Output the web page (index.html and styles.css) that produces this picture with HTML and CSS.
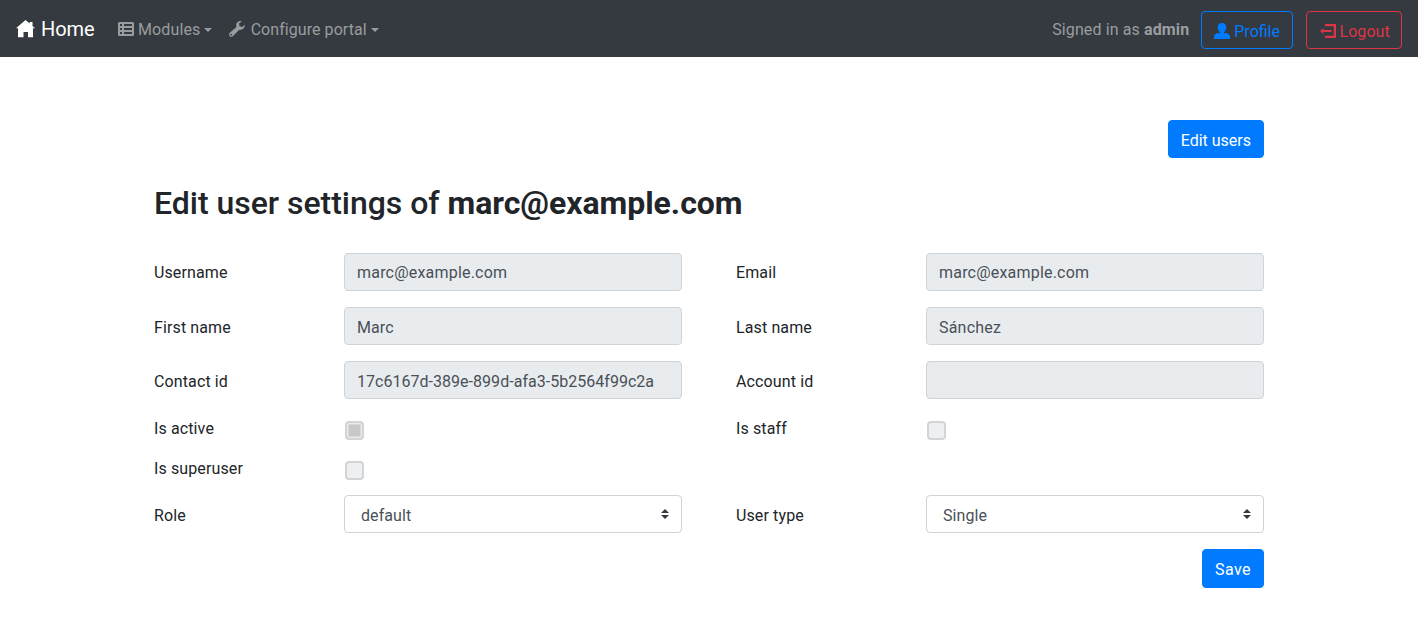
FILE: index.html
```html
<!DOCTYPE html>
<html lang="en">
<head>
<meta charset="utf-8">
<title>Edit user settings</title>
<link rel="stylesheet" href="styles.css">
</head>
<body>
<nav class="navbar">
  <a class="brand"><svg class="icon-home" viewBox="0 0 20 18"><path d="M9.500 0 0 8.300H2V17.300H7.500V12H12V17.300H17V8.300H19.200L16.500 5.900V2H13.700V3.600Z"/></svg><span>Home</span></a>
  <a class="nav-link modules"><svg class="icon" viewBox="0 0 16 16"><path fill-rule="evenodd" d="M1.500 1H14.500Q16 1 16 2.500V13.500Q16 15 14.500 15H1.500Q0 15 0 13.500V2.500Q0 1 1.500 1ZM2 3V5H4V3ZM6 3V5H14V3ZM2 7V9H4V7ZM6 7V9H14V7ZM2 11V13H4V11ZM6 11V13H14V11Z"/></svg><span>Modules</span><i class="caret"></i></a>
  <a class="nav-link configure"><svg class="icon wrench" viewBox="0 0 16 16"><path fill-rule="evenodd" d="M11.500 0Q8 .2 7.300 3.200Q7 4.500 7.400 6L.8 11.700Q-.6 13.200.6 14.900Q2 16.600 3.800 15.200L10 8.900Q12.500 9.500 14.500 7.600Q16 6 15.900 3.800L13.200 6.100 10.600 5.300 10 2.600 12.800.2ZM2.200 12.700A.9.9 0 1 1 2.100 14.500.9.9 0 0 1 2.200 12.700Z"/></svg><span>Configure portal</span><i class="caret"></i></a>
  <div class="account">
    <span class="signed">Signed in as <b>admin</b></span>
    <a class="btn outline-primary"><svg class="icon" viewBox="0 0 16 16"><path d="M8 0C5 0 3.700 2 3.700 4.500C3.700 7.300 5.600 9.500 8 9.500C10.400 9.500 12.300 7.300 12.300 4.500C12.300 2 11 0 8 0ZM4.300 9.800Q0 11 0 14V16H16V14Q16 11 11.700 9.800Q8 12.500 4.300 9.800Z"/><path d="M6 8.500H10V12H6Z"/></svg><span>Profile</span></a>
    <a class="btn outline-danger logout"><svg class="icon" viewBox="0 0 16 16"><path d="M5 1H16V15H5V12.700H13.700V3.300H5ZM0 8 3.500 5V7H11.500V9H3.500V11Z"/></svg><span>Logout</span></a>
  </div>
</nav>
<main class="container">
  <div class="actions"><a class="btn primary">Edit users</a></div>
  <h1 class="title">Edit user settings of <b>marc@example.com</b></h1>
  <form class="form">
    <label class="label first">Username</label><div class="control disabled email first-control">marc@example.com</div>
    <label class="label second first">Email</label><div class="control disabled email first-control">marc@example.com</div>
    <label class="label">First name</label><div class="control disabled">Marc</div>
    <label class="label second">Last name</label><div class="control disabled email">Sánchez</div>
    <label class="label">Contact id</label><div class="control disabled identifier">17c6167d-389e-899d-afa3-5b2564f99c2a</div>
    <label class="label second">Account id</label><div class="control disabled"></div>
    <label class="label short">Is active</label><div class="check-cell"><span class="check checked"></span></div>
    <label class="label second short">Is staff</label><div class="check-cell"><span class="check"></span></div>
    <label class="label short">Is superuser</label><div class="check-cell wide"><span class="check"></span></div>
    <label class="label">Role</label><div class="control select"><span>default</span><svg class="arrows" viewBox="0 0 8 10"><path d="M4 0 0 4H8ZM4 10 0 6H8Z"/></svg></div>
    <label class="label second">User type</label><div class="control select"><span>Single</span><svg class="arrows" viewBox="0 0 8 10"><path d="M4 0 0 4H8ZM4 10 0 6H8Z"/></svg></div>
  </form>
  <div class="submit"><a class="btn primary save">Save</a></div>
</main>
</body>
</html>
```
FILE: styles.css
```css
* { box-sizing: border-box; }
body { margin: 0; background: #fff; color: #212529; font: 16px/24px Roboto, sans-serif; }
.navbar { display: flex; align-items: center; height: 57px; padding: 3px 16px 0; background: #343a40; color: #9a9d9f; }
.brand { display: flex; align-items: center; gap: 5px; margin-right: 23.600px; padding-bottom: 2px; color: #fff; font-size: 20px; letter-spacing: -.1px; }
.icon-home { width: 20px; height: 18px; fill: currentColor; }
.nav-link { display: flex; align-items: center; gap: 4px; margin-right: 16px; letter-spacing: .12px; }
.configure { letter-spacing: .06px; margin-left: .6px; }
.icon { width: 16px; height: 16px; margin-top: -2px; fill: currentColor; flex: none; }
.wrench { margin-right: 1.600px; }
.caret { border: 4.800px solid transparent; border-top-color: currentColor; border-bottom: 0; }
.account { display: flex; align-items: center; margin-left: auto; gap: 12px; }
.signed { letter-spacing: .12px; }
.btn { display: inline-flex; align-items: center; gap: 4px; height: 38px; padding: 3px 12px 0; border: 1px solid; border-radius: 4px; }
.outline-primary { color: #007bff; }
.outline-danger { color: #dc3545; }
.logout { width: 96.500px; margin-left: .5px; padding-left: 13px; letter-spacing: .05px; }
.primary { background: #007bff; border-color: #007bff; color: #fff; }
.save { height: 39px; letter-spacing: .45px; }
.container { width: 1110px; margin: 0 auto; padding-top: 63px; }
.actions, .submit { display: flex; justify-content: flex-end; }
.title { margin: 26px 0 31px; font-size: 32px; line-height: 38px; font-weight: 500; letter-spacing: -.03px; }
.form { display: grid; grid-template-columns: 190px 338px 244px 338px; row-gap: 16px; }
.label { padding-top: 8.500px; letter-spacing: .12px; }
.first { padding-top: 7.500px; }
.second { padding-left: 54px; }
.short { padding-top: 2px; height: 24px; }
.control { display: flex; align-items: center; height: 38px; padding: 3px 12px 0; border: 1px solid #ced4da; border-radius: 4px; color: #495057; letter-spacing: .08px; }
.email { letter-spacing: .2px; }
.first-control { padding-top: 1px; }
.identifier { letter-spacing: .03px; }
.disabled { background: #e9ecef; }
.select { justify-content: space-between; padding-left: 16px; }
.arrows { width: 8px; height: 10px; margin-top: -4px; fill: #343a40; }
.check-cell { padding: 6px 0 0 1px; height: 24px; }
.wide { grid-column: span 3; }
.check { display: block; width: 19px; height: 19px; border: 2px solid #d3d4d5; border-radius: 4px; background: #eeeff1; }
.checked { background: #c8c8c8; box-shadow: inset 0 0 0 1.500px #e9eaeb; }
.submit { margin-top: 16px; }
```
